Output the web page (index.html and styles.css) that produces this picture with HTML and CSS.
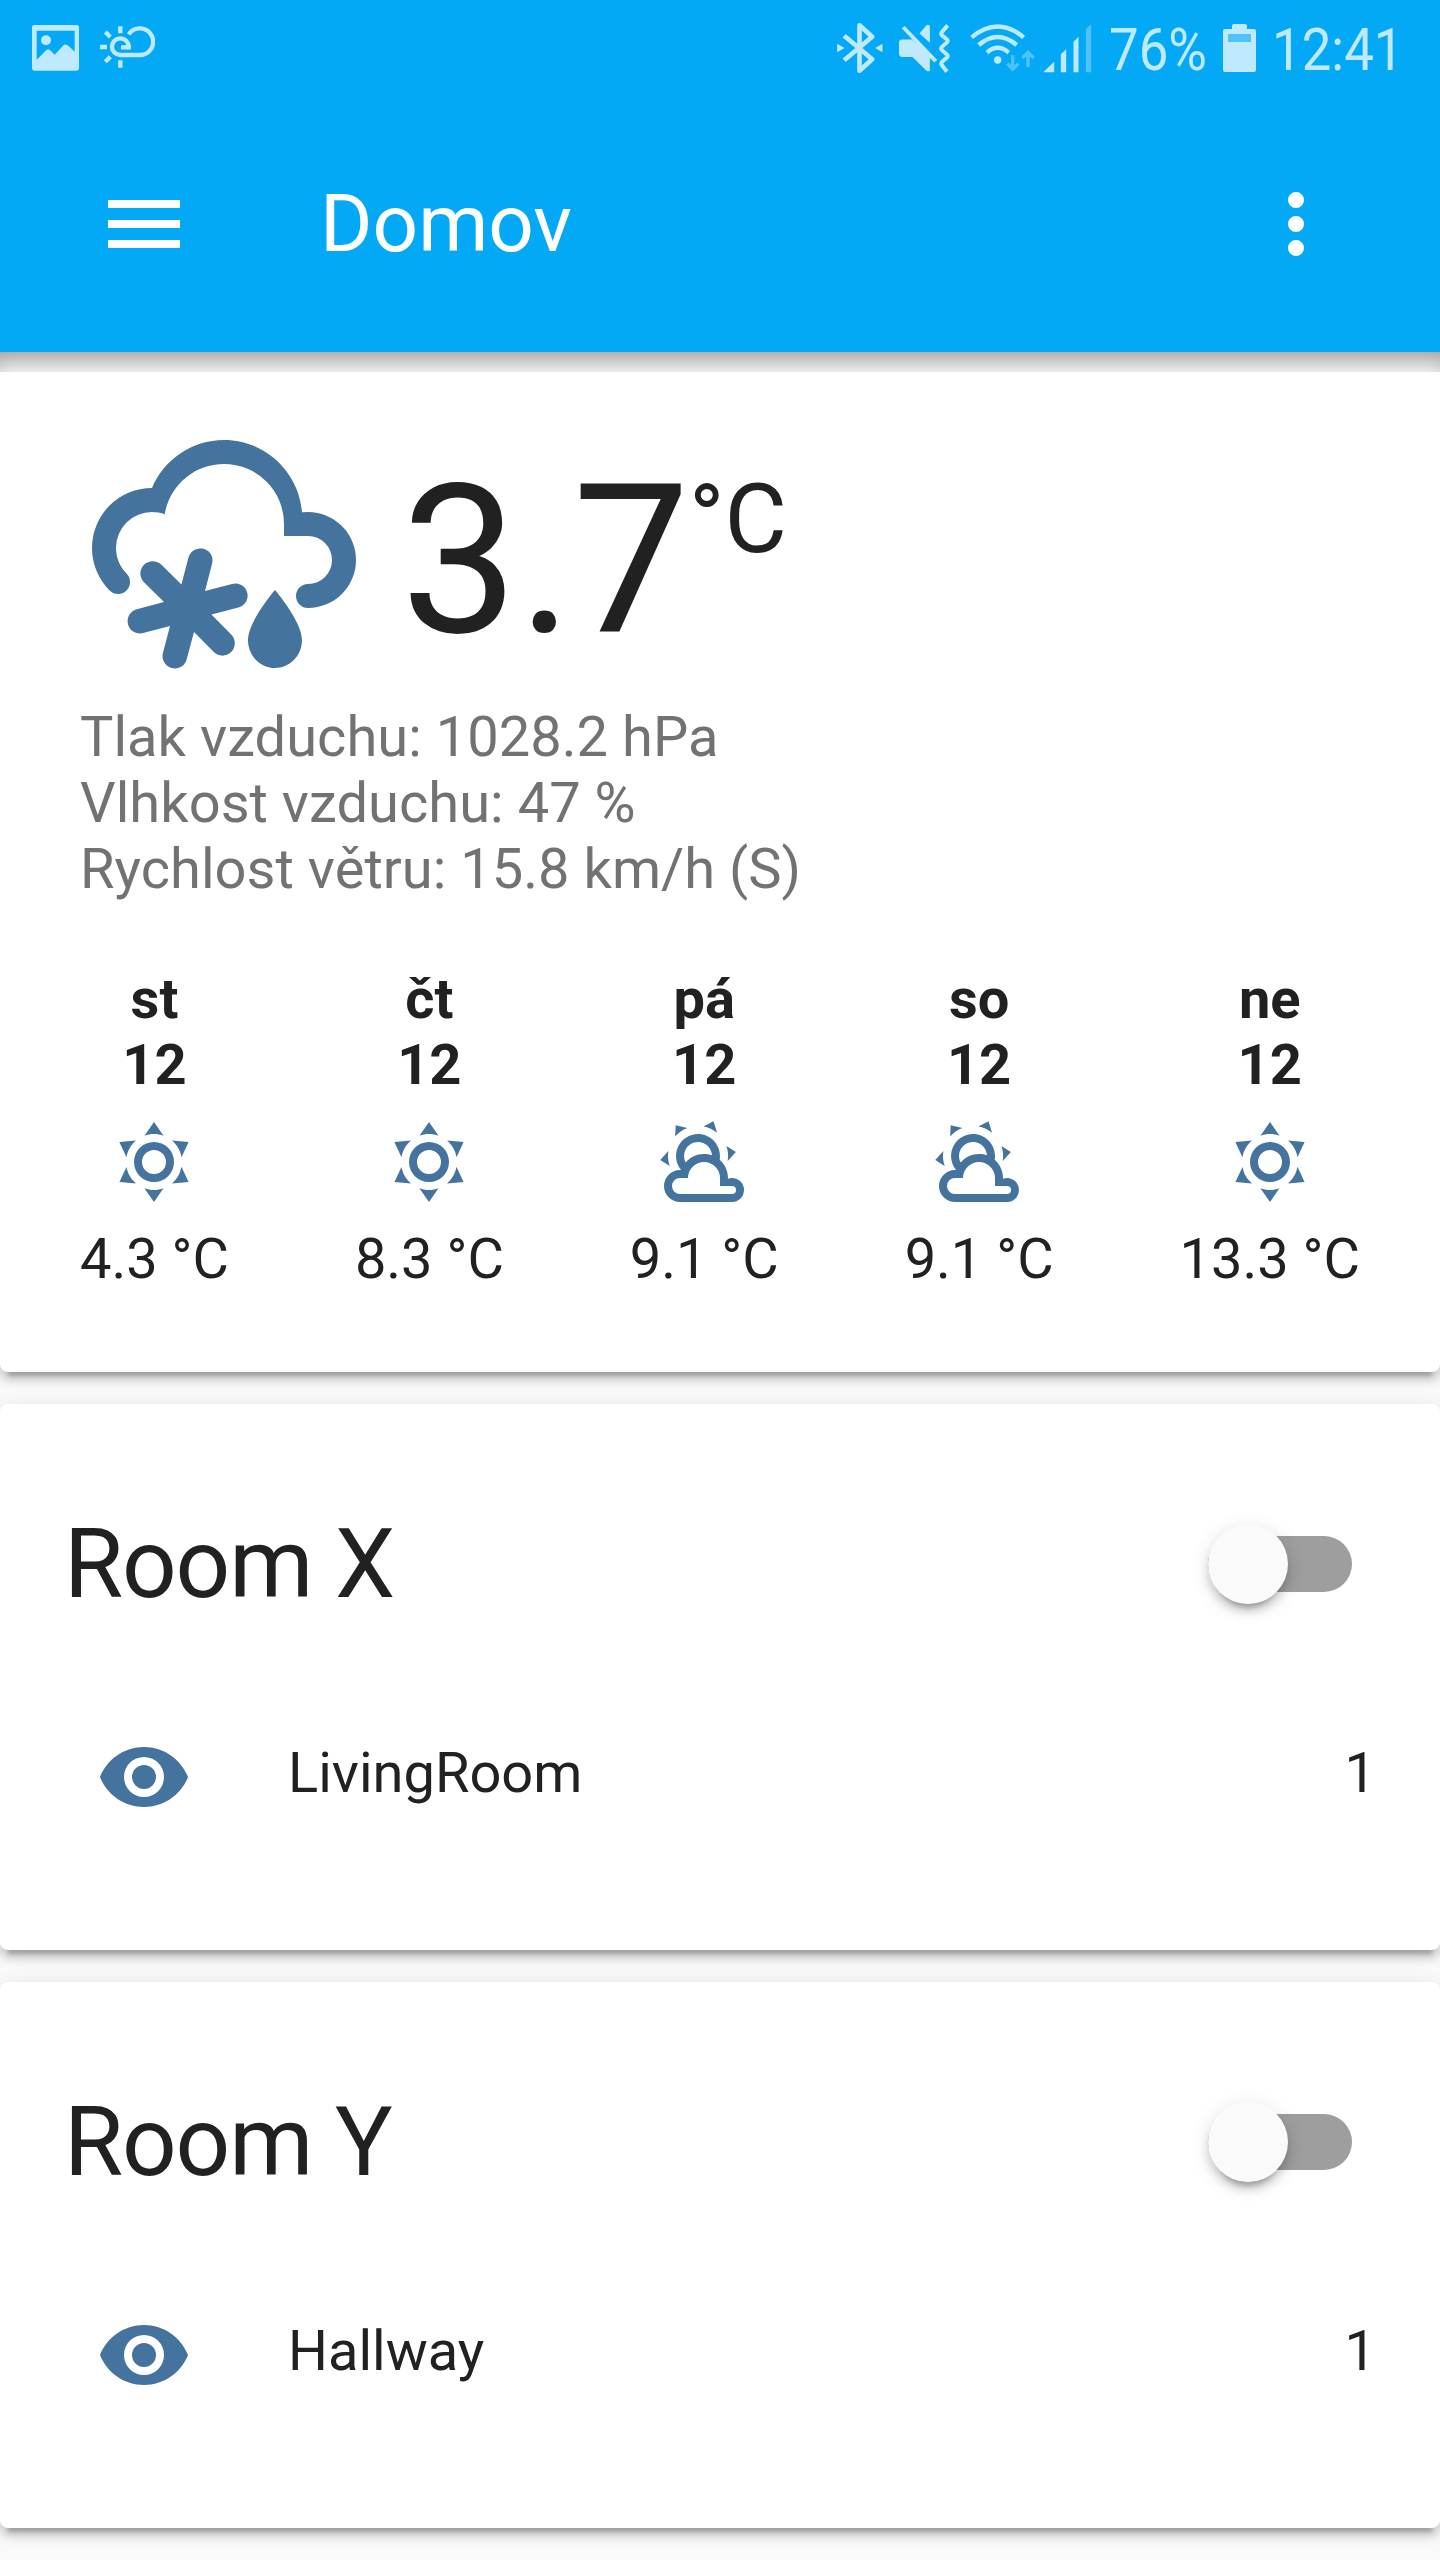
FILE: index.html
```html
<!DOCTYPE html>
<html lang="cs">
<head>
<meta charset="utf-8">
<title>Domov</title>
<link rel="stylesheet" href="styles.css">
</head>
<body>
<svg class="sprite" width="0" height="0">
  <symbol id="sunny" viewBox="0 0 24 24"><path d="M12,7A5,5 0 0,1 17,12A5,5 0 0,1 12,17A5,5 0 0,1 7,12A5,5 0 0,1 12,7M12,9A3,3 0 0,0 9,12A3,3 0 0,0 12,15A3,3 0 0,0 15,12A3,3 0 0,0 12,9M12,2L14.39,5.42C13.65,5.15 12.84,5 12,5C11.16,5 10.35,5.15 9.61,5.42L12,2M3.34,7L7.5,6.65C6.9,7.16 6.36,7.78 5.94,8.5C5.5,9.24 5.25,10 5.11,10.79L3.34,7M3.36,17L5.12,13.23C5.26,14 5.53,14.78 5.95,15.5C6.37,16.24 6.91,16.86 7.5,17.37L3.36,17M20.65,7L18.88,10.79C18.74,10 18.47,9.23 18.05,8.5C17.63,7.78 17.1,7.15 16.5,6.64L20.65,7M20.64,17L16.5,17.36C17.09,16.85 17.62,16.22 18.04,15.5C18.46,14.77 18.73,14 18.87,13.21L20.64,17M12,22L9.59,18.56C10.33,18.83 11.14,19 12,19C12.82,19 13.63,18.83 14.37,18.56L12,22Z"/></symbol>
  <symbol id="partly" viewBox="0 0 24 24"><path d="M12.74,5.47C15.1,6.5 16.35,9.03 15.92,11.46C17.19,12.56 18,14.19 18,16V16.17C18.31,16.06 18.65,16 19,16A3,3 0 0,1 22,19A3,3 0 0,1 19,22H6A4,4 0 0,1 2,18A4,4 0 0,1 6,14H6.27C5,12.45 4.6,10.24 5.5,8.26C6.72,5.5 9.97,4.24 12.74,5.47M11.93,7.3C10.16,6.5 8.09,7.31 7.31,9.07C6.85,10.09 6.93,11.22 7.41,12.13C8.5,10.83 10.16,10 12,10C12.7,10 13.38,10.12 14,10.34C13.94,9.06 13.18,7.86 11.93,7.3M13.55,3.64C13,3.4 12.45,3.23 11.88,3.12L14.37,1.82L15.27,4.71C14.76,4.29 14.19,3.93 13.55,3.64M6.09,4.44C5.6,4.79 5.17,5.19 4.8,5.63L4.91,2.82L7.87,3.5C7.25,3.71 6.65,4.03 6.09,4.44M18,9.71C17.91,9.12 17.78,8.55 17.59,8L19.97,9.5L17.92,11.73C18.03,11.08 18.05,10.4 18,9.71M3.04,11.3C3.11,11.9 3.24,12.47 3.43,13L1.06,11.5L3.1,9.28C3,9.93 2.97,10.61 3.04,11.3M19,18H16V16A4,4 0 0,0 12,12A4,4 0 0,0 8,16H6A2,2 0 0,0 4,18A2,2 0 0,0 6,20H19A1,1 0 0,0 20,19A1,1 0 0,0 19,18Z"/></symbol>
  <symbol id="eye" viewBox="0 0 24 24"><path d="M12,9A3,3 0 0,0 9,12A3,3 0 0,0 12,15A3,3 0 0,0 15,12A3,3 0 0,0 12,9M12,17A5,5 0 0,1 7,12A5,5 0 0,1 12,7A5,5 0 0,1 17,12A5,5 0 0,1 12,17M12,4.5C7,4.5 2.73,7.61 1,12C2.73,16.39 7,19.5 12,19.5C17,19.5 21.27,16.39 23,12C21.27,7.61 17,4.5 12,4.5Z"/></symbol>
</svg>

<header class="header">
  <div class="status">
    <div class="status-group">
      <svg width="47" height="46" viewBox="35 44 141 138"><path fill-rule="evenodd" d="M42 44H169Q176 44 176 51V174Q176 181 169 181H42Q35 181 35 174V51Q35 44 42 44ZM49 61V148L76 121Q84 114 92 122L103 133L128 106Q136 98 145 107L163 124V61Z"/><circle cx="77" cy="90" r="15"/></svg>
      <svg class="sun-cloud" width="55" height="42" viewBox="239 53 165 126"><g fill="none" stroke="currentColor" stroke-width="13"><path d="M325 78A40 40 0 1 1 357 140H300A25 25 0 1 1 325 115V123"/><path d="M331 117H302"/><path d="M300 54V75M300 156V178M239 116H260M255 71L270 86M255 160L270 145"/></g></svg>
    </div>
    <div class="status-group">
      <svg width="46" height="50" viewBox="21 39 137 150"><g fill="none" stroke="currentColor" stroke-width="14" stroke-linejoin="round"><path d="M42 77L86 114L126 148L88 182V46L126 80L86 114L42 151"/></g><path d="M21 101L43 114L21 127ZM157 101L135 114L157 127Z"/></svg>
      <svg class="mute" width="51" height="49" viewBox="207 42 152 146"><path d="M215 88H246L299 142V181Q294 185 289 181L247 140H215Q207 139 207 131V97Q207 89 215 88ZM268 70L287 48Q294 41 299 48V98ZM215 55L224 48L321 149L312 157Z"/><path d="M352 46L335 66Q331 71 335 76L350 88Q354 92 350 97L335 110Q331 115 335 120L350 133Q354 138 350 142L335 155Q331 160 335 165L350 184" fill="none" stroke="currentColor" stroke-width="12"/></svg>
      <svg class="wifi" width="65" height="49" viewBox="30 41 195 147"><g fill="none" stroke="currentColor" stroke-width="13"><path d="M35 81Q113 16 191 81M56 104Q113 56 170 104M81 127Q113 98 146 127"/></g><circle cx="113" cy="149" r="11"/><g class="dim-stroke"><path d="M158 135V176M142 160L158 177L175 160M204 171V128M187 143L204 126L221 143"/></g></svg>
      <svg class="signal" width="49" height="49" viewBox="248 41 146 147"><path d="M248 186L281 154V186ZM301 186V132L317 117V186ZM339 186V94L354 79V186Z"/><path class="dim" d="M376 186V57L392 42V186Z"/></svg>
      <span class="status-text battery-level">76%</span>
      <svg class="battery" width="33" height="48" viewBox="0 0 33 48"><path d="M9 5V2Q9 0 11 0H22Q24 0 24 2V5H31Q33 5 33 7V46Q33 48 31 48H2Q0 48 0 46V7Q0 5 2 5Z"/><path class="charge" d="M5 10H28V18H5Z"/></svg>
      <span class="status-text clock">12:41</span>
    </div>
  </div>
  <div class="toolbar">
    <svg class="icon-white" width="96" height="96" viewBox="0 0 24 24"><path d="M3,6H21V8H3V6M3,11H21V13H3V11M3,16H21V18H3V16Z"/></svg>
    <h1 class="title">Domov</h1>
    <svg class="icon-white" width="96" height="96" viewBox="0 0 24 24"><path d="M12,16A2,2 0 0,1 14,18A2,2 0 0,1 12,20A2,2 0 0,1 10,18A2,2 0 0,1 12,16M12,10A2,2 0 0,1 14,12A2,2 0 0,1 12,14A2,2 0 0,1 10,12A2,2 0 0,1 12,10M12,4A2,2 0 0,1 14,6A2,2 0 0,1 12,8A2,2 0 0,1 10,6A2,2 0 0,1 12,4Z"/></svg>
  </div>
</header>
<div class="header-shadow"></div>

<main class="cards">
  <section class="card weather">
    <div class="now">
      <svg class="icon" width="288" height="288" viewBox="0 0 24 24"><path d="M18.5,18.67C18.5,19.96 17.5,21 16.25,21C15,21 14,19.96 14,18.67C14,17.12 16.25,14.5 16.25,14.5C16.25,14.5 18.5,17.12 18.5,18.67M4,17.36C3.86,16.82 4.18,16.25 4.73,16.11L7,15.5L5.33,13.86C4.93,13.46 4.93,12.81 5.33,12.4C5.73,12 6.4,12 6.79,12.4L8.45,14.05L9.04,11.8C9.18,11.24 9.75,10.92 10.29,11.07C10.85,11.21 11.17,11.78 11,12.33L10.42,14.58L12.67,14C13.22,13.83 13.79,14.15 13.93,14.71C14.08,15.25 13.76,15.82 13.2,15.96L10.95,16.55L12.6,18.21C13,18.6 13,19.27 12.6,19.67C12.2,20.07 11.54,20.07 11.15,19.67L9.5,18L8.89,20.27C8.75,20.83 8.18,21.14 7.64,21C7.08,20.86 6.77,20.29 6.91,19.74L7.5,17.5L5.26,18.09C4.71,18.23 4.14,17.92 4,17.36M1,11A5,5 0 0,1 6,6C7,3.65 9.3,2 12,2C15.43,2 18.24,4.66 18.5,8.03L19,8A4,4 0 0,1 23,12A4,4 0 0,1 19,16A1,1 0 0,1 18,15A1,1 0 0,1 19,14A2,2 0 0,0 21,12A2,2 0 0,0 19,10H17V9A5,5 0 0,0 12,4C9.5,4 7.45,5.82 7.06,8.19C6.73,8.07 6.37,8 6,8A3,3 0 0,0 3,11C3,11.85 3.35,12.61 3.91,13.16C4.27,13.55 4.26,14.16 3.88,14.54C3.5,14.93 2.85,14.93 2.47,14.54C1.56,13.63 1,12.38 1,11Z"/></svg>
      <div class="temp">3.7</div>
      <div class="unit">°C</div>
    </div>
    <div class="attributes">
      <div>Tlak vzduchu: 1028.2 hPa</div>
      <div>Vlhkost vzduchu: 47 %</div>
      <div>Rychlost větru: 15.8 km/h (S)</div>
    </div>
    <div class="forecast">
      <div class="day"><b>st<br>12</b><svg class="icon" width="96" height="96"><use href="#sunny"/></svg><span>4.3 °C</span></div>
      <div class="day"><b>čt<br>12</b><svg class="icon" width="96" height="96"><use href="#sunny"/></svg><span>8.3 °C</span></div>
      <div class="day"><b>pá<br>12</b><svg class="icon" width="96" height="96"><use href="#partly"/></svg><span>9.1 °C</span></div>
      <div class="day"><b>so<br>12</b><svg class="icon" width="96" height="96"><use href="#partly"/></svg><span>9.1 °C</span></div>
      <div class="day"><b>ne<br>12</b><svg class="icon" width="96" height="96"><use href="#sunny"/></svg><span>13.3 °C</span></div>
    </div>
  </section>

  <section class="card room">
    <div class="room-head"><h2 class="room-name">Room X</h2><div class="toggle"><div class="knob"></div></div></div>
    <div class="entity"><svg class="icon" width="96" height="96"><use href="#eye"/></svg><span class="entity-name">LivingRoom</span><span class="entity-state">1</span></div>
  </section>

  <section class="card room">
    <div class="room-head"><h2 class="room-name">Room Y</h2><div class="toggle"><div class="knob"></div></div></div>
    <div class="entity"><svg class="icon" width="96" height="96"><use href="#eye"/></svg><span class="entity-name">Hallway</span><span class="entity-state">1</span></div>
  </section>
</main>
</body>
</html>
```

FILE: styles.css
```css
* { box-sizing: border-box; }
html, body { height: 2560px; overflow: hidden; }
body {
  margin: 0;
  background: #fafafa;
  color: #212121;
  font: 56px/66px Roboto, sans-serif;
}
svg { display: block; flex: none; fill: currentColor; }
.sprite { position: absolute; }
.icon { color: #44739e; }
.icon-white { color: #fff; }

.header { height: 352px; background: #03a9f4; color: #fff; }
.status {
  height: 96px;
  display: flex;
  justify-content: space-between;
  padding: 0 42px 0 32px;
  color: #bfe9fd;
}
.status-group { display: flex; align-items: center; }
.sun-cloud { margin: 0 0 2px 21px; }
.mute { margin-left: 16px; }
.wifi { margin-left: 20px; }
.signal { margin-left: 8px; }
.dim { fill: #4fc2f8; }
.dim-stroke { fill: none; stroke: #4fc2f8; stroke-width: 10; }
.charge { fill: #4fc2f8; }
.status-text {
  font-size: 60px;
  line-height: 96px;
  transform: scaleX(.88);
  transform-origin: 0 50%;
  white-space: nowrap;
}
.battery-level { width: 97px; margin-left: 17px; padding-top: 3px; }
.battery { margin-left: 17px; }
.clock { width: 126px; margin-left: 16px; padding-top: 3px; }

.toolbar { height: 256px; padding: 0 96px; display: flex; align-items: center; }
.title { margin: 0 auto 0 128px; font-size: 80px; line-height: 96px; font-weight: 400; }
.header-shadow { height: 20px; box-shadow: inset 0 20px 24px -12px rgba(0, 0, 0, .4); }

.cards { display: flex; flex-direction: column; gap: 32px; }
.card {
  background: #fff;
  border-radius: 8px;
  box-shadow: 0 8px 8px 0 rgba(0, 0, 0, .14), 0 4px 20px 0 rgba(0, 0, 0, .12), 0 12px 4px -8px rgba(0, 0, 0, .2);
}
/* The first card sits flush under the header, so its upward shadow is clipped away. */
.weather {
  height: 1000px;
  padding: 44px 80px 0;
  border-radius: 0 0 8px 8px;
  clip-path: inset(0 0 -32px 0);
}
.now { display: flex; height: 288px; }
.temp { margin-left: 33px; font-size: 208px; line-height: 290px; }
.unit { margin-left: -1px; font-size: 96px; line-height: 206px; }
.attributes { color: #727272; letter-spacing: .04px; }
.forecast { margin-top: 64px; display: flex; justify-content: space-between; }
.day { display: flex; flex-direction: column; align-items: center; text-align: center; }
.day .icon { margin: 16px 0; }

.room { height: 546px; padding: 96px 64px 0; }
.room-head { display: flex; justify-content: space-between; align-items: center; height: 128px; }
.room-name { margin: 0; font-size: 96px; line-height: 126px; font-weight: 400; letter-spacing: -.012em; }
.toggle {
  width: 144px;
  height: 56px;
  margin-right: 24px;
  border-radius: 28px;
  background: #9e9e9e;
  display: flex;
  align-items: center;
}
.knob {
  width: 80px;
  height: 80px;
  flex: none;
  border-radius: 50%;
  background: #fafafa;
  box-shadow: 0 8px 8px 0 rgba(0, 0, 0, .14), 0 4px 20px 0 rgba(0, 0, 0, .12), 0 12px 4px -8px rgba(0, 0, 0, .2);
}
.entity { margin-top: 96px; padding-left: 32px; display: flex; align-items: center; height: 106px; }
.entity-name { margin: 0 auto 8px 96px; }
.entity-state { margin-bottom: 8px; }
```
